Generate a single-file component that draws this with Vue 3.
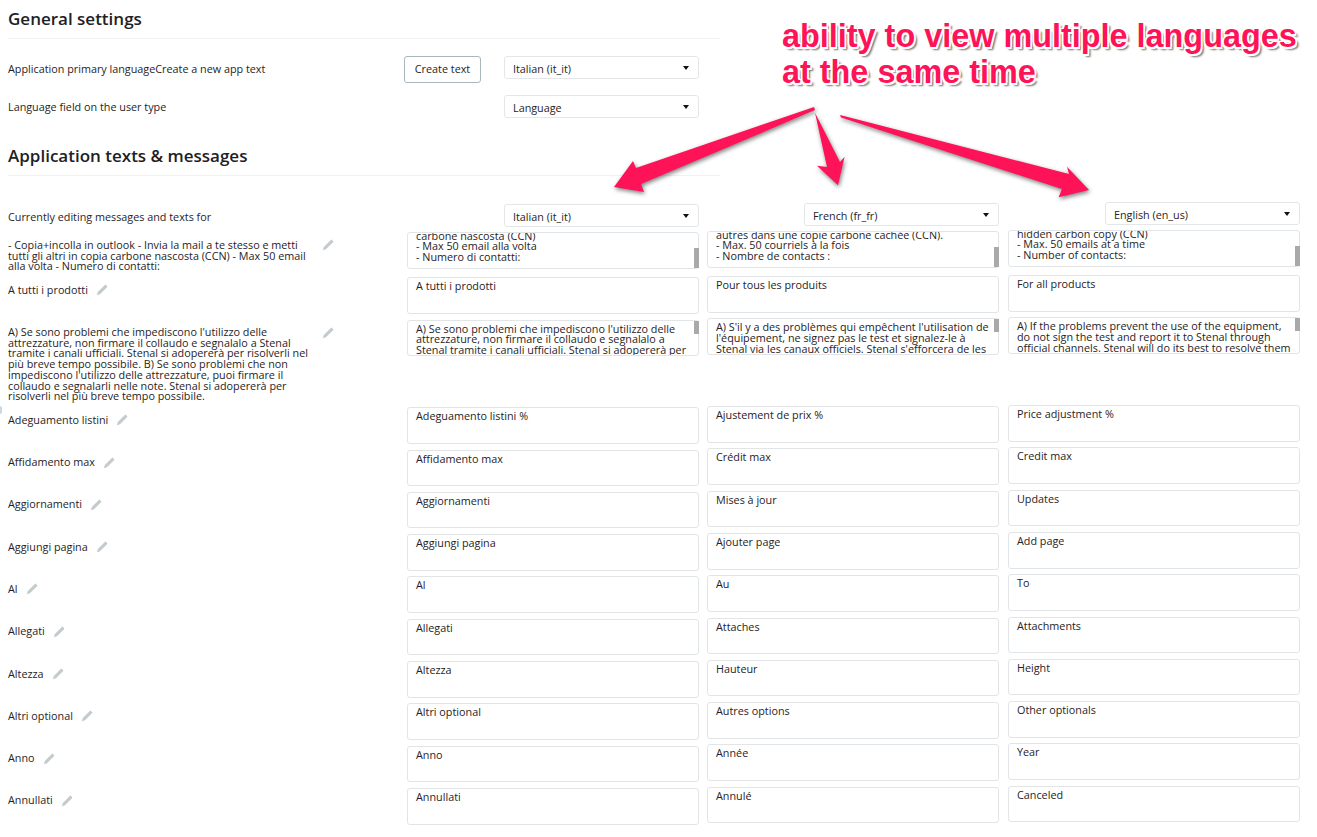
<script setup>
import { ref, onMounted } from 'vue'

const langs = ['Italian (it_it)', 'French (fr_fr)', 'English (en_us)']

const rows = [
  {
    label: '- Copia+incolla in outlook - Invia la mail a te stesso e metti tutti gli altri in copia carbone nascosta (CCN) - Max 50 email alla volta - Numero di contatti:',
    texts: [
      '- Copia+incolla in outlook\n- Invia la mail a te stesso e metti tutti gli altri in copia carbone nascosta (CCN)\n- Max 50 email alla volta\n- Numero di contatti:',
      '- Copier+coller dans outlook\n- Envoyez le courriel à vous-même et mettez tous les autres dans une copie carbone cachée (CCN).\n- Max. 50 courriels à la fois\n- Nombre de contacts :',
      '- Copy+paste in outlook\n- Send the email to yourself and put all the others in hidden carbon copy (CCN)\n- Max. 50 emails at a time\n- Number of contacts:'
    ],
    thumb: 'low'
  },
  { label: 'A tutti i prodotti', texts: ['A tutti i prodotti', 'Pour tous les produits', 'For all products'] },
  {
    label: "A) Se sono problemi che impediscono l'utilizzo delle attrezzature, non firmare il collaudo e segnalalo a Stenal tramite i canali ufficiali. Stenal si adopererà per risolverli nel più breve tempo possibile. B) Se sono problemi che non impediscono l'utilizzo delle attrezzature, puoi firmare il collaudo e segnalarli nelle note. Stenal si adopererà per risolverli nel più breve tempo possibile.",
    texts: [
      "A) Se sono problemi che impediscono l'utilizzo delle attrezzature, non firmare il collaudo e segnalalo a Stenal tramite i canali ufficiali. Stenal si adopererà per risolverli nel più breve tempo possibile. B) Se sono problemi che non impediscono l'utilizzo delle attrezzature, puoi firmare il collaudo e segnalarli nelle note. Stenal si adopererà per risolverli nel più breve tempo possibile.",
      "A) S'il y a des problèmes qui empêchent l'utilisation de l'équipement, ne signez pas le test et signalez-le à Stenal via les canaux officiels. Stenal s'efforcera de les résoudre dans les plus brefs délais. B) S'il y a des problèmes qui n'empêchent pas l'utilisation de l'équipement, vous pouvez signer le test et les signaler dans les notes. Stenal s'efforcera de les résoudre dans les plus brefs délais.",
      'A) If the problems prevent the use of the equipment, do not sign the test and report it to Stenal through official channels. Stenal will do its best to resolve them as soon as possible. B) If the problems do not prevent the use of the equipment, you can sign the test and report them in the notes. Stenal will do its best to resolve them as soon as possible.'
    ],
    thumb: 'high'
  },
  { label: 'Adeguamento listini', texts: ['Adeguamento listini %', 'Ajustement de prix %', 'Price adjustment %'] },
  { label: 'Affidamento max', texts: ['Affidamento max', 'Crédit max', 'Credit max'] },
  { label: 'Aggiornamenti', texts: ['Aggiornamenti', 'Mises à jour', 'Updates'] },
  { label: 'Aggiungi pagina', texts: ['Aggiungi pagina', 'Ajouter page', 'Add page'] },
  { label: 'Al', texts: ['Al', 'Au', 'To'] },
  { label: 'Allegati', texts: ['Allegati', 'Attaches', 'Attachments'] },
  { label: 'Altezza', texts: ['Altezza', 'Hauteur', 'Height'] },
  { label: 'Altri optional', texts: ['Altri optional', 'Autres options', 'Other optionals'] },
  { label: 'Anno', texts: ['Anno', 'Année', 'Year'] },
  { label: 'Annullati', texts: ['Annullati', 'Annulé', 'Canceled'] }
]

const list = ref(null)
onMounted(() => {
  list.value.querySelectorAll('.low textarea').forEach((t) => {
    t.scrollTop = t.scrollHeight
  })
})
</script>

<template>
  <div class="page">
    <section class="general">
      <h2 class="title">General settings</h2>
      <div class="setting first">
        <span class="text">Application primary languageCreate a new app text</span>
        <button class="btn" type="button">Create text</button>
        <div class="pick"><select tabindex="-1"><option>Italian (it_it)</option></select></div>
      </div>
      <div class="setting second">
        <span class="text">Language field on the user type</span>
        <div class="pick"><select tabindex="-1"><option>Language</option></select></div>
      </div>
    </section>

    <section class="messages">
      <h2 class="title">Application texts &amp; messages</h2>
      <div class="grid head">
        <span class="text cur">Currently editing messages and texts for</span>
        <div v-for="(l, i) in langs" :key="l" class="pick" :class="'col' + i">
          <select tabindex="-1"><option>{{ l }}</option></select>
        </div>
      </div>
      <div ref="list" class="list">
        <div v-for="r in rows" :key="r.label" class="grid row">
          <div class="label">
            <span class="text">{{ r.label }}</span>
            <svg class="pencil" viewBox="0 0 12 12" width="12" height="12" aria-hidden="true">
              <path d="M0.8 11.2 L1.8 8 L8.6 1.2 L10.8 3.4 L4 10.2 Z" fill="#c4cbcf" />
              <path d="M9.3 0.6 L11.4 2.7 L10.8 3.4 L8.6 1.2 Z" fill="#b3bcc1" />
            </svg>
          </div>
          <div v-for="(t, i) in r.texts" :key="i" class="box" :class="['col' + i, r.thumb]">
            <textarea class="ta" :value="t" readonly tabindex="-1"></textarea>
            <i v-if="r.thumb" class="thumb"></i>
          </div>
        </div>
      </div>
    </section>

    <div class="note">ability to view multiple languages<br />at the same time</div>
    <svg class="arrows" viewBox="0 0 1317 837" width="1317" height="837" aria-hidden="true">
      <polygon points="814,107 815,110 641,184 644,192 614,187 633,161 636,168" />
      <polygon points="815,112.7 840,162 844.6,156.7 838,185.3 817,165.7 827,167" />
      <polygon points="840,115 1069,174 1067,166.7 1089,190 1058.6,197.3 1062,189 841,117.5" />
    </svg>
  </div>
</template>

<style>
html, body { margin: 0; background: #fff; }
</style>

<style scoped>
.page {
  position: relative;
  width: 1317px;
  height: 837px;
  overflow: hidden;
  background: #fff;
  color: #1f2326;
  font-family: "Open Sans", sans-serif;
  font-size: 10.8px;
  line-height: 10.7px;
  box-sizing: border-box;
  padding: 8px 0 0 8px;
}
.page::before {
  content: "";
  position: absolute;
  left: 0;
  top: 406px;
  width: 2px;
  height: 8px;
  border-radius: 0 2px 2px 0;
  background: #c9d9e4;
}
.title {
  width: 712px;
  margin: 0;
  padding-bottom: 8.3px;
  border-bottom: 1px solid #eff1f2;
  font-size: 17px;
  line-height: 22px;
  font-weight: 600;
  color: #1d2124;
}
.setting {
  display: flex;
  align-items: center;
  width: 691px;
}
.setting.first { margin-top: 16.7px; height: 26.7px; }
.setting.second { margin-top: 12.3px; height: 23px; }
.setting.second .text { padding-top: 1px; }
.setting .text { flex: 1; }
.btn {
  box-sizing: border-box;
  width: 77px;
  height: 26.7px;
  margin-right: 23px;
  padding: 0;
  background: #fff;
  border: 1px solid #a9b8c0;
  border-radius: 3px;
  font: inherit;
  color: inherit;
}
.pick {
  position: relative;
  width: 195px;
  height: 23px;
  justify-self: end;
}
.setting.first .pick { align-self: flex-start; }
.pick select {
  appearance: none;
  box-sizing: border-box;
  display: block;
  width: 100%;
  height: 100%;
  padding: 1.5px 8px 0;
  background: #fff;
  border: 1px solid #e4e7e9;
  border-radius: 3px;
  font-family: inherit;
  font-size: inherit;
  line-height: normal;
  color: inherit;
  outline: none;
}
.pick::after {
  content: "";
  position: absolute;
  right: 10px;
  top: 10px;
  border-style: solid;
  border-width: 4px 3.5px 0;
  border-color: #111 transparent transparent;
}
.messages { margin-top: 27px; }
.grid {
  display: grid;
  grid-template-columns: 391px 292px 292px 292px;
  column-gap: 8px;
  width: 1292px;
}
.head {
  margin-top: 28.2px;
  height: 27.9px;
  align-items: start;
}
.cur { margin-top: 8px; }
.col1 { margin-top: -1.2px; }
.col2 { margin-top: -2.2px; }
.box.col2 { margin-left: 1px; }
.pick.col2 { margin-right: -1px; }
.row { min-height: 42.3px; align-items: start; }
.label {
  display: flex;
  align-items: flex-start;
  padding: 7.5px 0 5.3px;
}
.label .text { max-width: 306px; }
.pencil {
  flex: none;
  margin: -0.5px 0 0 8px;
}
.box {
  position: relative;
  width: 292px;
  height: 36.6px;
}
.ta {
  display: block;
  box-sizing: border-box;
  width: 100%;
  height: 100%;
  padding: 3px 8px 5px;
  resize: none;
  background: #fff;
  border: 1px solid #e2e5e7;
  border-radius: 3px;
  font: inherit;
  color: inherit;
  outline: none;
  overflow: hidden;
}
.thumb {
  position: absolute;
  right: 0.5px;
  width: 4.5px;
  background: #a9a9a9;
}
.low .thumb { bottom: 1px; height: 20px; }
.high .thumb { top: 1px; height: 13px; }
.note {
  position: absolute;
  left: 782px;
  top: 18px;
  font-family: "Liberation Sans", Arial, sans-serif;
  font-size: 32.4px;
  line-height: 36px;
  font-weight: 700;
  color: #ff1358;
  white-space: nowrap;
  text-shadow:
    1.5px 0 0 #fff, -1.5px 0 0 #fff, 0 1.5px 0 #fff, 0 -1.5px 0 #fff,
    1.5px 1.5px 0 #fff, -1.5px -1.5px 0 #fff, 1.5px -1.5px 0 #fff, -1.5px 1.5px 0 #fff,
    3px 3px 2px rgba(0, 0, 0, 0.55);
}
.arrows {
  position: absolute;
  left: 0;
  top: 0;
  pointer-events: none;
  filter: drop-shadow(1.5px 2px 2px rgba(0, 0, 0, 0.5));
}
.arrows polygon { fill: #ff1358; }
</style>
